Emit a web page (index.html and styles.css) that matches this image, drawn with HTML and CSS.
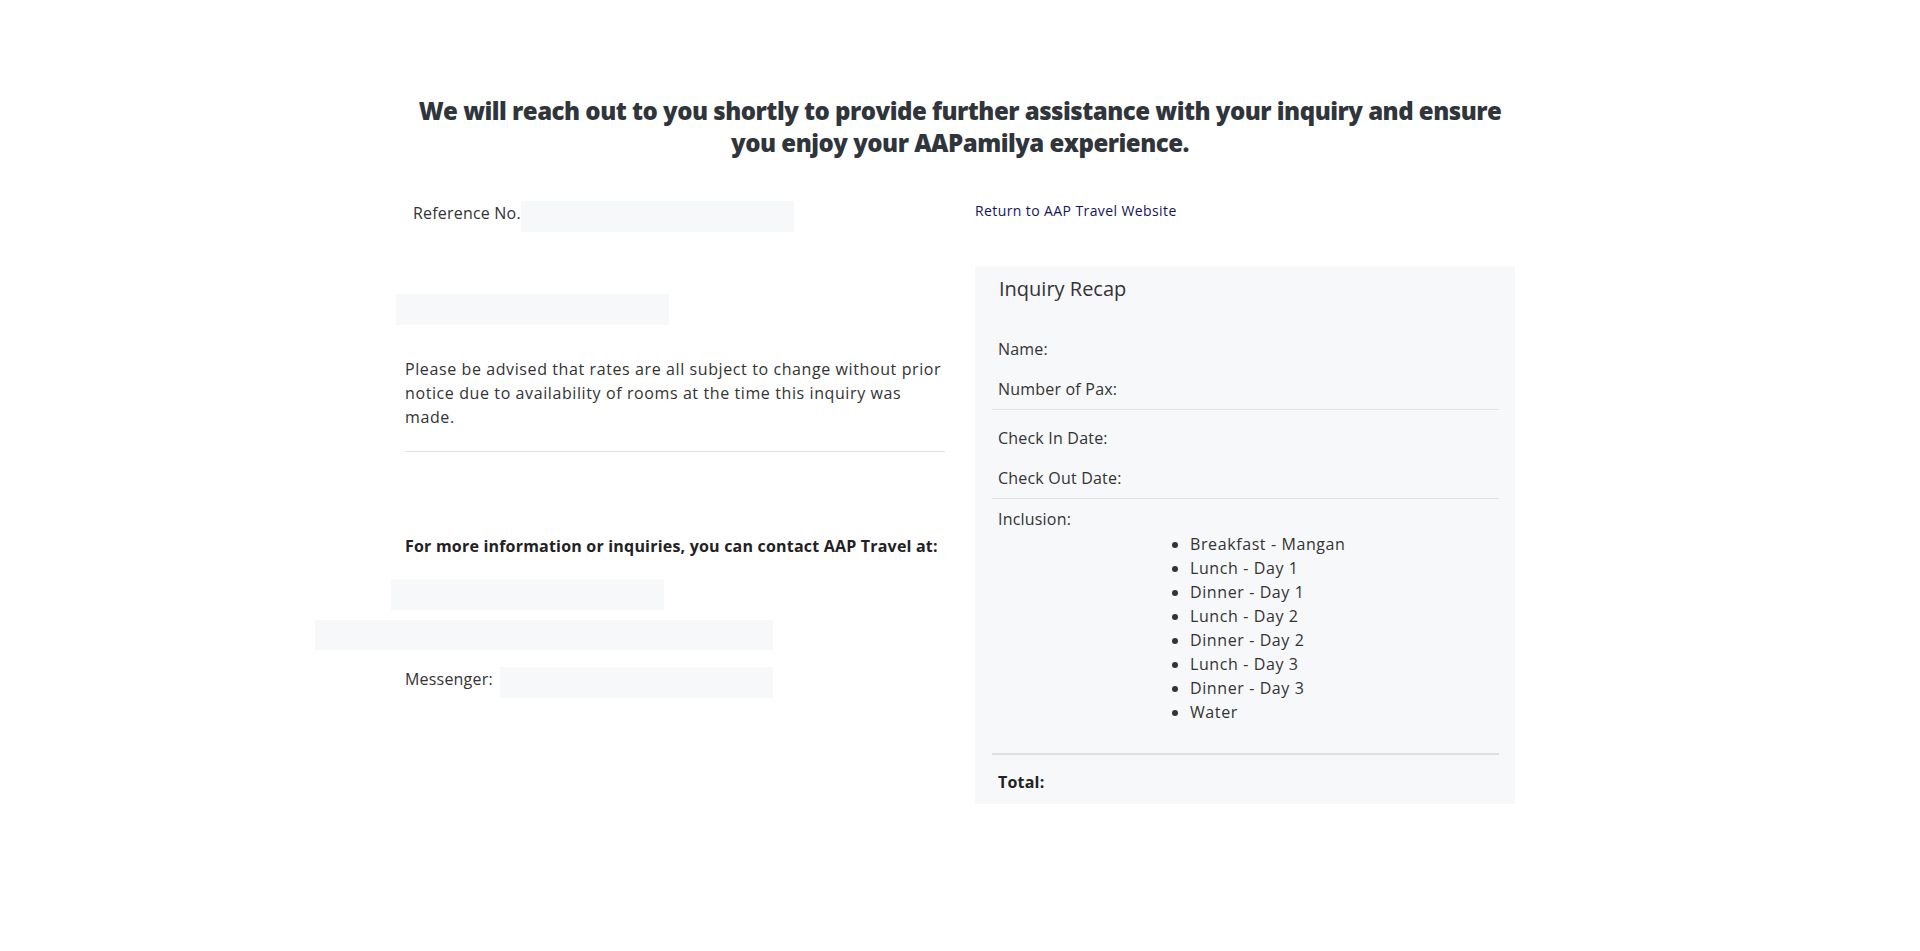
FILE: index.html
```html
<!DOCTYPE html>
<html lang="en">
<head>
<meta charset="utf-8">
<title>Inquiry Submitted</title>
<link rel="stylesheet" href="styles.css">
</head>
<body>
<div class="container">
  <h1 class="headline">We will reach out to you shortly to provide further assistance with your inquiry and ensure you enjoy your AAPamilya experience.</h1>
  <div class="row">
    <div class="col col-left">
      <div class="ref-row">
        <span class="ref-label">Reference No.</span>
        <span class="blank blank-ref"></span>
      </div>
      <div class="blank blank-status"></div>
      <p class="notice">Please be advised that rates are all subject to change without prior notice due to availability of rooms at the time this inquiry was made.</p>
      <hr class="rule">
      <p class="contact-title">For more information or inquiries, you can contact AAP Travel at:</p>
      <div class="blank blank-phone"></div>
      <div class="blank blank-email"></div>
      <div class="messenger-row">
        <span class="messenger-label">Messenger:</span>
        <span class="blank blank-messenger"></span>
      </div>
    </div>
    <div class="col col-right">
      <a class="return-link" href="#">Return to AAP Travel Website</a>
      <div class="recap">
        <h2 class="recap-title">Inquiry Recap</h2>
        <div class="recap-row">Name:</div>
        <div class="recap-row">Number of Pax:</div>
        <hr class="recap-rule">
        <div class="recap-row">Check In Date:</div>
        <div class="recap-row">Check Out Date:</div>
        <hr class="recap-rule">
        <div class="inclusion-label">Inclusion:</div>
        <ul class="inclusion-list">
          <li>Breakfast - Mangan</li>
          <li>Lunch - Day 1</li>
          <li>Dinner - Day 1</li>
          <li>Lunch - Day 2</li>
          <li>Dinner - Day 2</li>
          <li>Lunch - Day 3</li>
          <li>Dinner - Day 3</li>
          <li>Water</li>
        </ul>
        <hr class="total-rule">
        <div class="total">Total:</div>
      </div>
    </div>
  </div>
</div>
</body>
</html>
```

FILE: styles.css
```css
* { box-sizing: border-box; }

body {
  margin: 0;
  background: #ffffff;
  color: #333333;
  font-family: "Open Sans", "Noto Sans", sans-serif;
  font-size: 16px;
  line-height: 24px;
  letter-spacing: 0.2px;
}

.container {
  width: 1140px;
  margin: 0 auto;
  padding-top: 95px;
}

.headline {
  margin: 0 auto;
  width: 1110px;
  text-align: center;
  font-family: "Open Sans", sans-serif;
  font-weight: 800;
  font-size: 24px;
  line-height: 32px;
  letter-spacing: -0.5px;
  color: #2f353b;
}

.row {
  display: flex;
  margin-top: 34px;
}

.col {
  width: 570px;
  padding: 0 15px;
}

.blank {
  display: block;
  background: #f7f8f9;
  height: 31px;
  width: 273px;
}

.ref-row {
  display: flex;
  align-items: flex-start;
  padding-left: 8px;
  margin-top: 8px;
}

.ref-label {
  width: 108px;
  flex: none;
  white-space: nowrap;
  line-height: 24px;
}

.blank-status {
  margin-top: 62px;
  margin-left: -9px;
}

.notice {
  margin: 32px 0 0;
  line-height: 24px;
  letter-spacing: 0.6px;
}

.rule {
  margin: 22px 0 0;
  border: 0;
  border-top: 1px solid #dfe2e5;
}

.contact-title {
  margin: 82px 0 0;
  font-weight: 700;
  color: #222222;
}

.blank-phone {
  margin-top: 21px;
  margin-left: -14px;
}

.blank-email {
  margin-top: 10px;
  margin-left: -90px;
  width: 458px;
  height: 30px;
}

.messenger-row {
  display: flex;
  align-items: flex-start;
  margin-top: 17px;
}

.messenger-label {
  width: 95px;
  flex: none;
  white-space: nowrap;
  line-height: 24px;
}

.blank-messenger {
  width: 273px;
}

.return-link {
  display: block;
  margin-top: 8px;
  font-size: 14px;
  line-height: 20px;
  letter-spacing: 0.4px;
  color: #14145a;
  text-decoration: none;
}

.recap {
  margin-top: 45px;
  background: #f7f8f9;
  padding: 9px 16px 10px 17px;
}

.recap-title {
  margin: 0 0 0 7px;
  font-weight: 400;
  font-size: 20px;
  line-height: 28px;
  letter-spacing: 0;
  color: #333333;
}

.recap-row {
  padding: 8px 6px;
  line-height: 24px;
}

.recap-row:first-of-type { margin-top: 26px; }

.recap-rule {
  margin: 0 0 8px;
  border: 0;
  border-top: 1px solid #dfe2e5;
}

.inclusion-label {
  padding: 0 6px;
  line-height: 24px;
}

.inclusion-list {
  margin: 1px 0 0 158px;
  padding-left: 40px;
  line-height: 24px;
  letter-spacing: 0.6px;
}

.total-rule {
  margin: 29px 0 0;
  border: 0;
  border-top: 2px solid #dcdfe2;
}

.total {
  margin-top: 15px;
  padding: 0 6px;
  font-weight: 700;
  color: #222222;
}
```
